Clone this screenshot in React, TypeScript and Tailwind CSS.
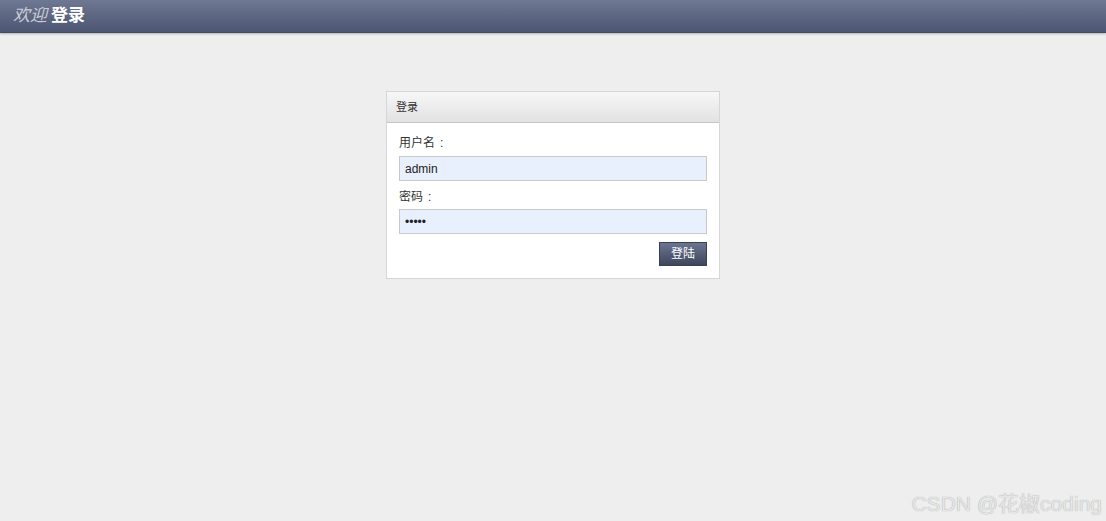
import React from "react";

export default function App() {
  const font = { fontFamily: '"Liberation Sans", Arial, "Noto Sans CJK SC", sans-serif' };
  return (
    <div className="relative w-[1106px] h-[521px] bg-[#eeeeee] overflow-hidden" style={font}>
      <div className="h-[33px] bg-gradient-to-b from-[#6e7893] to-[#4c5672] border-b border-[#434b63] shadow-[0_1px_2px_rgba(0,0,0,0.25)] flex items-center pl-[13px]">
        <span className="text-[17px] italic text-[#c9ccd6]">欢迎</span>
        <span className="text-[17px] font-bold text-white ml-[4px]">登录</span>
      </div>
      <div className="flex justify-center pt-[58px]">
        <div className="w-[334px] bg-white border border-[#d6d6d6]">
          <div className="h-[31px] bg-gradient-to-b from-[#f7f7f7] to-[#e2e2e2] border-b border-[#c6c6c6] flex items-center px-[9px] text-[11px] text-[#333]">
            登录
          </div>
          <div className="px-[12px] pt-[11px] pb-[12px] flex flex-col">
            <div className="h-[18px] leading-[18px] text-[12px] text-[#333]">
              用户名<span className="ml-[5px]">:</span>
            </div>
            <input
              className="mt-[4px] h-[25px] w-full bg-[#e8f0fe] border border-[#c9c9c9] px-[5px] text-[12px] text-[#222] outline-none"
              defaultValue="admin"
              style={font}
            />
            <div className="mt-[7px] h-[18px] leading-[18px] text-[12px] text-[#333]">
              密码<span className="ml-[5px]">:</span>
            </div>
            <input
              type="password"
              className="mt-[3px] h-[25px] w-full bg-[#e8f0fe] border border-[#c9c9c9] px-[5px] text-[12px] text-[#222] outline-none"
              defaultValue="admin"
              style={font}
            />
            <div className="flex justify-end mt-[8px]">
              <button className="w-[48px] h-[24px] bg-gradient-to-b from-[#6c7590] to-[#3f475e] border border-[#39404f] text-white text-[12px] flex items-center justify-center">
                登陆
              </button>
            </div>
          </div>
        </div>
      </div>
      <div
        className="absolute right-[4px] bottom-[7px] text-[21px] text-[#e6e6e6] leading-none"
        style={{ fontFamily: '"Liberation Sans", "Noto Sans CJK SC", sans-serif', textShadow: "0 0 1px #9a9a9a" }}
      >
        CSDN @花椒coding
      </div>
    </div>
  );
}
